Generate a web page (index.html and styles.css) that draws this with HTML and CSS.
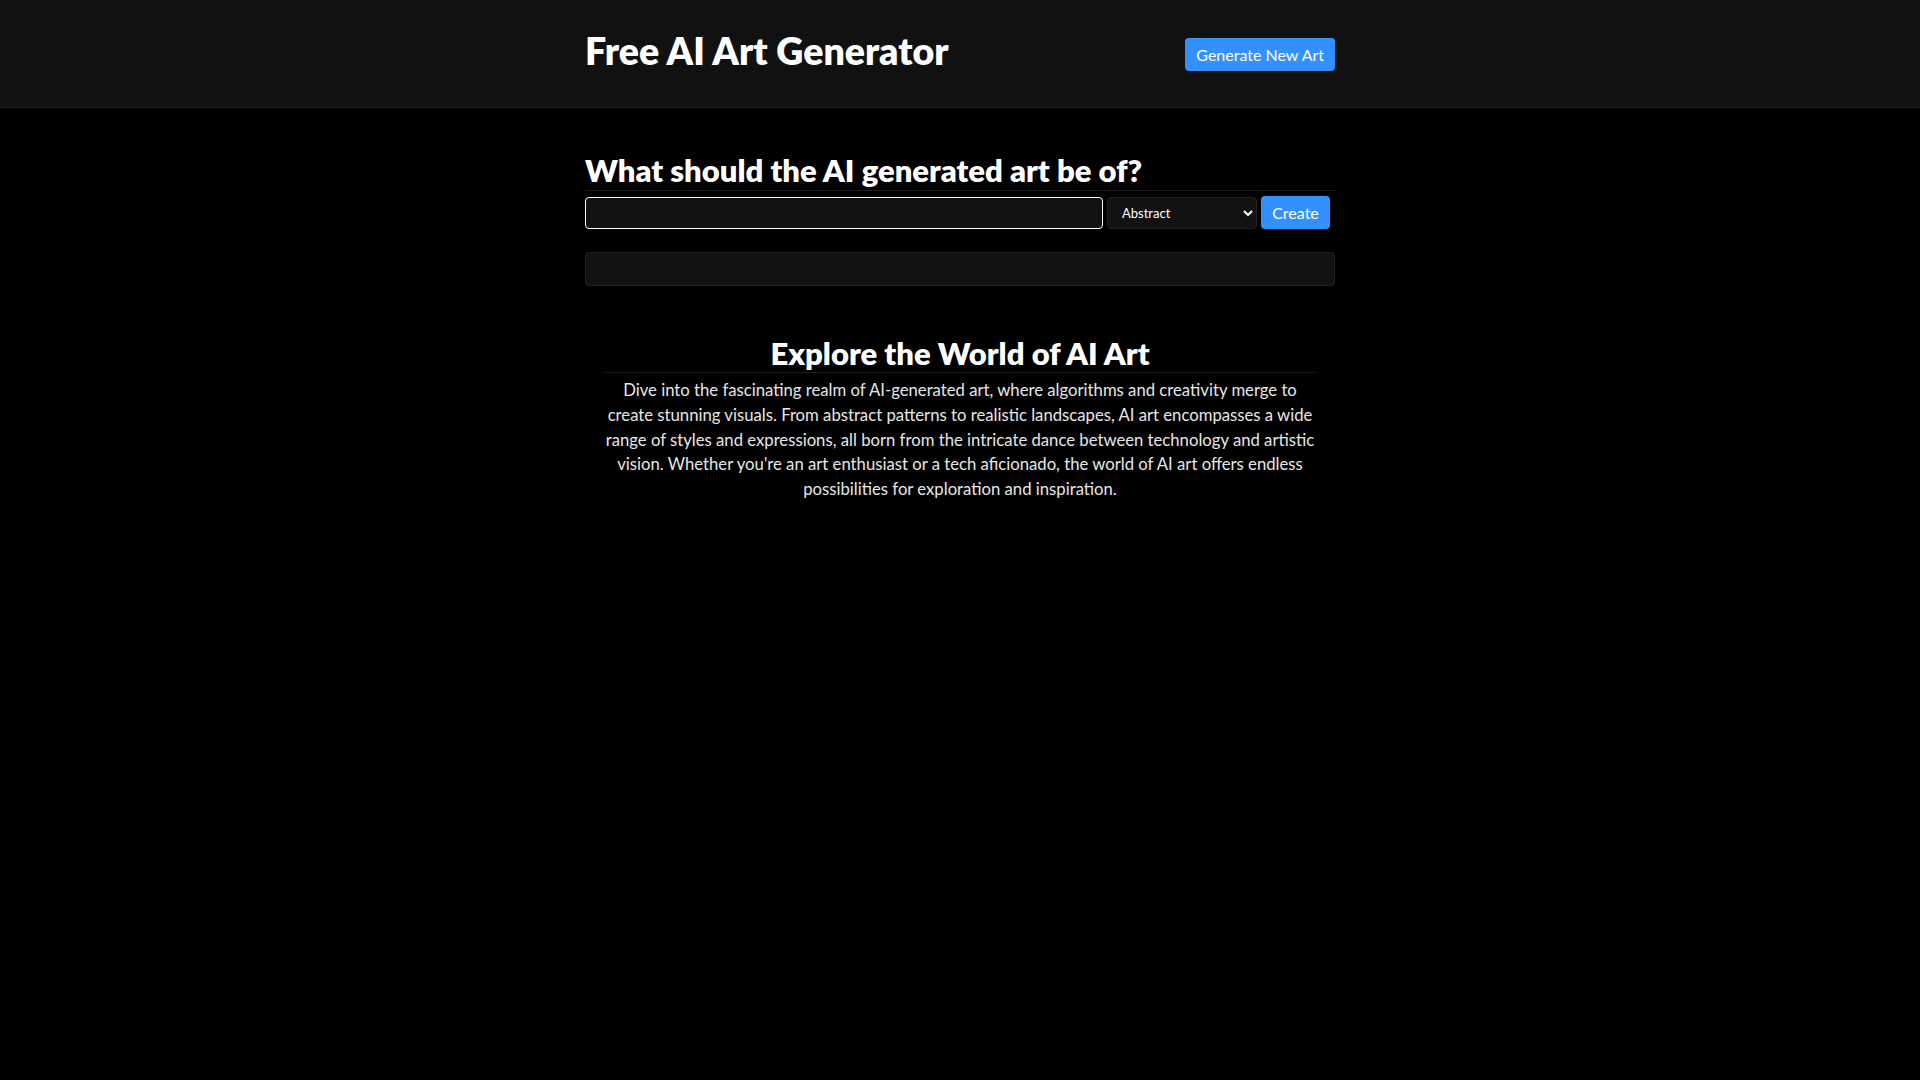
FILE: index.html
```html
<!DOCTYPE html>
<html lang="en">
<head>
    <meta charset="UTF-8">
    <meta name="viewport" content="width=device-width, initial-scale=1.0">
    <title>Free AI Art Generator</title>
    <link rel="stylesheet" href="styles.css">
</head>
<body>
    <!-- Top bar -->
    <header class="header">
        <div class="header-inner">
            <h1>Free AI Art Generator</h1>
            <button class="btn btn-new">Generate New Art</button>
        </div>
    </header>

    <main class="container">
        <!-- Prompt form -->
        <section class="prompt">
            <h2 class="prompt-title">What should the AI generated art be of?</h2>
            <form class="prompt-form" id="art-form">
                <input type="text" id="prompt-input" class="prompt-input">
                <select id="style-select" class="style-select">
                    <option>Abstract</option>
                    <option>Realistic</option>
                    <option>Cartoon</option>
                    <option>Fantasy</option>
                </select>
                <button type="submit" class="btn btn-create">Create</button>
            </form>
            <div class="result" id="result"></div>
        </section>

        <!-- Info -->
        <section class="explore">
            <h2 class="explore-title">Explore the World of AI Art</h2>
            <p>Dive into the fascinating realm of AI-generated art, where algorithms and creativity merge to create stunning visuals. From abstract patterns to realistic landscapes, AI art encompasses a wide range of styles and expressions, all born from the intricate dance between technology and artistic vision. Whether you're an art enthusiast or a tech aficionado, the world of AI art offers endless possibilities for exploration and inspiration.</p>
        </section>
    </main>
</body>
</html>
```

FILE: styles.css
```css
body {
    font-family: Lato, "Noto Sans", sans-serif;
    background: #000;
    color: #fff;
    margin: 0;
}

.header {
    background: #111;
    border-bottom: 1px solid #222;
}

.header-inner {
    max-width: 750px;
    height: 107px;
    margin: 0 auto;
    display: flex;
    justify-content: space-between;
    align-items: center;
}

h1 {
    font-size: 37.5px;
    font-weight: 800;
    margin: 0 0 6px;
}

.btn {
    border: none;
    border-radius: 4px;
    background: #3391ff;
    color: #fff;
    font-family: inherit;
    font-size: 16px;
    cursor: pointer;
}

.btn-new {
    height: 33px;
    padding: 0 11px;
    margin-top: 2px;
}

.container {
    max-width: 750px;
    margin: 0 auto;
    padding-top: 43px;
}

.prompt-title {
    font-size: 31px;
    font-weight: 800;
    margin: 0;
    padding-bottom: 1px;
    border-bottom: 1px solid #1c1c1c;
}

.prompt-form {
    display: flex;
    align-items: center;
    gap: 4px;
    margin-top: 5px;
}

.prompt-input {
    width: 518px;
    height: 32px;
    box-sizing: border-box;
    background: #121212;
    border: 1px solid #fff;
    border-radius: 4px;
    color: #fff;
    outline: none;
}

.style-select {
    width: 150px;
    height: 32px;
    box-sizing: border-box;
    background: #121212;
    border: 1px solid #222;
    border-radius: 4px;
    color: #fff;
    font-family: inherit;
    font-size: 13px;
    padding: 0 10px;
}

.btn-create {
    width: 69px;
    height: 33px;
}

.result {
    height: 34px;
    box-sizing: border-box;
    margin-top: 23px;
    background: #121212;
    border: 1px solid #222;
    border-radius: 4px;
}

.explore {
    margin-top: 48px;
    padding: 0 20px;
    text-align: center;
}

.explore-title {
    font-size: 31px;
    font-weight: 800;
    margin: 0;
    border-bottom: 1px solid #1c1c1c;
}

.explore p {
    margin: 5px 0 0;
    font-size: 16.7px;
    line-height: 24.8px;
    color: #e6e6e6;
}
```
